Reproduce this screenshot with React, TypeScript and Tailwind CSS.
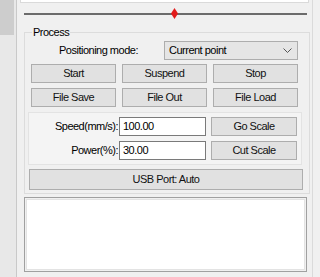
import React from "react";

const font = { fontFamily: '"Liberation Sans", Arial, sans-serif' };

function Btn({ label, className = "" }: { label: string; className?: string }) {
  return (
    <button
      className={`h-[19px] border border-[#adadad] bg-[#e1e1e1] text-[11px] leading-none tracking-[-0.5px] text-[#111] ${className}`}
    >
      {label}
    </button>
  );
}

function Field({ value }: { value: string }) {
  return (
    <div className="h-[19px] w-[87px] border border-[#7a7a7a] bg-white pl-[3px] text-[11px] leading-[17px] tracking-[-0.5px] text-black">
      {value}
    </div>
  );
}

export default function App() {
  return (
    <div className="flex h-[277px] w-[320px] overflow-hidden bg-[#f0f0f0]" style={font}>
      {/* left scroll strip */}
      <div className="w-[16px] bg-[#e8e8e8]">
        <div className="h-[35px] w-[14px] bg-[#cdcdcd]" />
      </div>
      <div className="w-px bg-[#c9c9c9]" />

      <div className="flex w-[295px] flex-col">
        <div className="ml-[3px] h-[3px] w-[289px] border-x border-b border-[#dadada] bg-white" />

        {/* slider */}
        <div className="relative ml-[7px] mt-[10px] h-[2px] w-[283px] bg-[#6b6b6b]">
          <svg className="absolute left-[147px] top-[-5px]" width="7" height="11" viewBox="0 0 7 11">
            <path d="M3.5 0 L7 5.5 L3.5 11 L0 5.5 Z" fill="#e21b1b" />
          </svg>
        </div>

        {/* process group */}
        <fieldset className="ml-[7px] mt-[10px] w-[283px] border border-[#dcdcdc] px-[6px] pb-[3px]">
          <legend className="ml-[1px] px-[1px] text-[11px] leading-[14px] tracking-[-0.5px] text-black">Process</legend>

          <div className="mt-[2px] flex h-[19px] items-center">
            <span className="ml-[28px] w-[105px] text-[11px] tracking-[-0.5px] text-black">Positioning mode:</span>
            <div className="flex h-[19px] w-[134px] items-center justify-between border border-[#adadad] bg-[#e5e5e5] pl-[4px] pr-[5px] text-[11px] tracking-[-0.5px] text-black">
              <span>Current point</span>
              <svg width="9" height="5" viewBox="0 0 9 5">
                <path d="M0.5 0.5 L4.5 4.5 L8.5 0.5" fill="none" stroke="#555" strokeWidth="1" />
              </svg>
            </div>
          </div>

          <div className="mt-[4px] grid w-[267px] grid-cols-3 gap-x-[6px] gap-y-[5px]">
            <Btn label="Start" />
            <Btn label="Suspend" />
            <Btn label="Stop" />
            <Btn label="File Save" />
            <Btn label="File Out" />
            <Btn label="File Load" />
          </div>

          {/* speed / power */}
          <div className="ml-[-3px] mt-[5px] flex w-[274px] flex-col gap-[5px] border border-[#e3e3e3] bg-[#f4f4f4] py-[4px]">
            <div className="flex items-center">
              <span className="w-[90px] pr-[1px] text-right text-[11px] tracking-[-0.5px] text-black">Speed(mm/s):</span>
              <Field value="100.00" />
              <Btn label="Go Scale" className="ml-[5px] w-[86px]" />
            </div>
            <div className="flex items-center">
              <span className="w-[90px] pr-[1px] text-right text-[11px] tracking-[-0.5px] text-black">Power(%):</span>
              <Field value="30.00" />
              <Btn label="Cut Scale" className="ml-[5px] w-[86px]" />
            </div>
          </div>

          <Btn label="USB Port: Auto" className="ml-[-2px] mt-[4px] h-[21px] w-[274px]" />
        </fieldset>

        {/* log box */}
        <div className="ml-[7px] mt-[3px] h-[75px] w-[283px] border border-[#a0a0a0] p-px">
          <div className="h-full w-full border border-[#e3e3e3] bg-white" />
        </div>
      </div>

      <div className="w-px bg-[#dadada]" />
      <div className="flex-1 bg-[#f0f0f0]" />
    </div>
  );
}
